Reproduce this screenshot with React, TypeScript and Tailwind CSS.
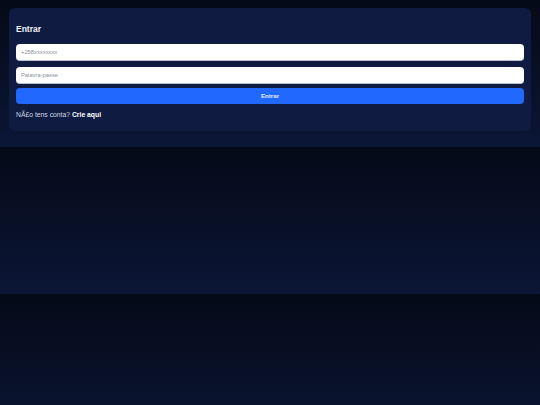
import React from "react"

const App = () => {
  return (
    <div className="min-h-screen bg-[linear-gradient(180deg,#050a17_0%,#0b1636_100%)] bg-[length:100%_147px] bg-repeat-y font-['Liberation_Sans',Arial,sans-serif]">
      <div className="h-[147px] px-2 pt-2">
        <div className="ml-[1px] mr-[1px] rounded-md bg-[#0f1b40] px-[7px] pt-[15px] pb-[11px]">
          <h2 className="mb-[9px] text-[8.5px] leading-[12px] font-bold text-[#eef1f8]">
            Entrar
          </h2>
          <div className="flex flex-col">
            <input
              type="text"
              placeholder="+258xxxxxxxx"
              className="h-[17px] w-full rounded-[4px] border-b border-[#b9bfcc] bg-white px-[5px] text-[5.8px] text-gray-800 outline-none placeholder:text-[#8a8f99]"
            />
            <input
              type="password"
              placeholder="Palavra-passe"
              className="mt-[6px] h-[17px] w-full rounded-[4px] border-b border-[#b9bfcc] bg-white px-[5px] text-[5.8px] text-gray-800 outline-none placeholder:text-[#8a8f99]"
            />
            <button className="mt-[4px] h-[16px] w-full rounded-[4px] bg-[#2168ff] text-[6.2px] font-semibold text-[#e6edff]">
              Entrar
            </button>
          </div>
          <p className="mt-[6px] text-[6.8px] leading-[10px] text-[#d0d6e4]">
            NÃ£o tens conta?{" "}
            <a href="#" className="font-bold text-white">
              Crie aqui
            </a>
          </p>
        </div>
      </div>
    </div>
  )
}

export default App
